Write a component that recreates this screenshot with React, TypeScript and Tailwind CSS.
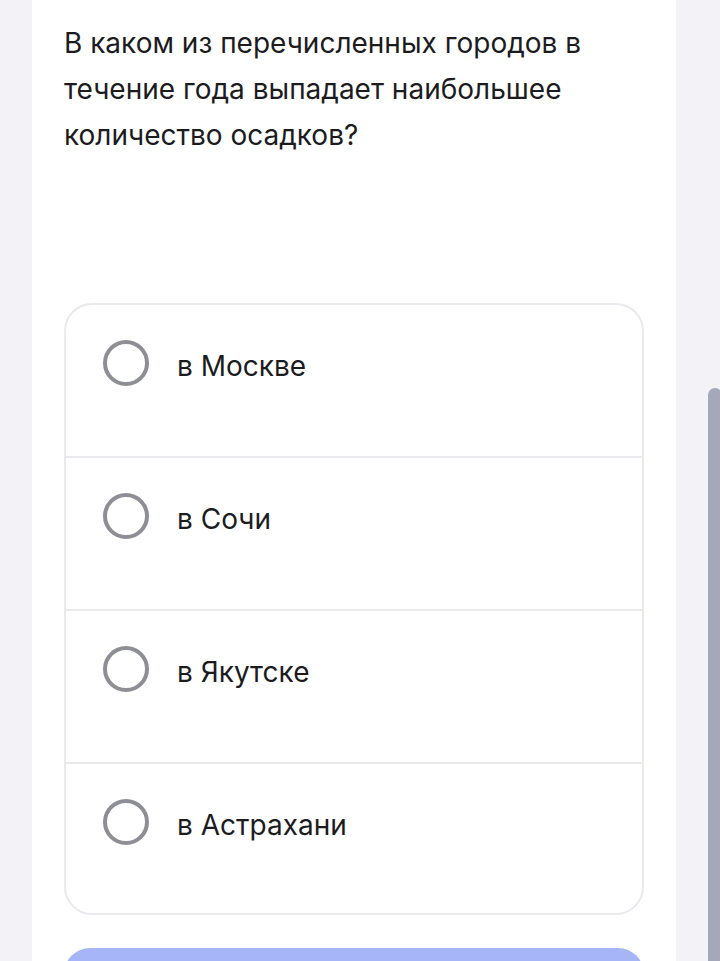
import React from "react";

const options = ["в Москве", "в Сочи", "в Якутске", "в Астрахани"];

function Radio() {
  return (
    <span className="block h-[46px] w-[46px] shrink-0 rounded-full border-[4px] border-[#8e8e96]" />
  );
}

export default function App() {
  return (
    <div
      className="relative flex h-[961px] w-[720px] overflow-hidden bg-[#f2f2f7]"
      style={{ fontFamily: "Inter, 'Noto Sans', sans-serif" }}
    >
      <div className="ml-[32px] flex w-[644px] flex-col bg-white px-[32px] pt-[20px]">
        <h1 className="text-[28px] font-normal leading-[46px] text-[#1c1c1f]">
          В каком из перечисленных городов в течение года выпадает наибольшее
          количество осадков?
        </h1>

        <div className="mt-[145px] flex flex-col rounded-[28px] border-2 border-[#e9e9ee]">
          {options.map((label, i) => (
            <div
              key={label}
              className={
                i < options.length - 1
                  ? "flex h-[153px] items-start gap-[28px] border-b-2 border-[#e9e9ee] pl-[37px] pt-[35px]"
                  : "flex h-[149px] items-start gap-[28px] pl-[37px] pt-[35px]"
              }
            >
              <Radio />
              <span className="mt-[3px] text-[28px] leading-[46px] text-[#1c1c1f]">
                {label}
              </span>
            </div>
          ))}
        </div>

        <button className="mt-[33px] h-[60px] w-full shrink-0 rounded-[26px] bg-[#a5b5f7]" />
      </div>

      {/* overlay scrollbar thumb */}
      <div className="absolute left-[708px] top-[388px] h-[600px] w-[14px] rounded-full bg-[#a5a8b8]" />
    </div>
  );
}
